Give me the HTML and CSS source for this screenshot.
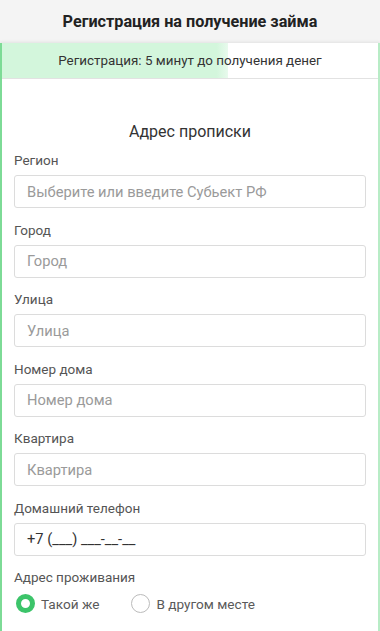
FILE: index.html
```html
<!DOCTYPE html>
<html lang="ru">
<head>
<meta charset="utf-8">
<link rel="stylesheet" href="styles.css">
</head>
<body>
<header class="top">Регистрация на получение займа</header>
<main class="card">
  <div class="progress">
    <div class="progress-fill" style="width:60%"></div>
    <span class="progress-text">Регистрация: 5 минут до получения денег</span>
  </div>
  <section class="form">
    <h2 class="form-title">Адрес прописки</h2>
    <div class="field">
      <label class="label">Регион</label>
      <div class="input placeholder">Выберите или введите Субьект РФ</div>
    </div>
    <div class="field">
      <label class="label">Город</label>
      <div class="input placeholder">Город</div>
    </div>
    <div class="field">
      <label class="label">Улица</label>
      <div class="input placeholder">Улица</div>
    </div>
    <div class="field">
      <label class="label">Номер дома</label>
      <div class="input placeholder">Номер дома</div>
    </div>
    <div class="field">
      <label class="label">Квартира</label>
      <div class="input placeholder">Квартира</div>
    </div>
    <div class="field">
      <label class="label">Домашний телефон</label>
      <div class="input value">+7 (___) ___-__-__</div>
    </div>
    <div class="field">
      <label class="label">Адрес проживания</label>
      <div class="radios">
        <span class="radio checked"><span class="dot"></span>Такой же</span>
        <span class="radio"><span class="dot"></span>В другом месте</span>
      </div>
    </div>
  </section>
</main>
</body>
</html>
```
FILE: styles.css
```css
* { box-sizing: border-box; }
html, body { margin: 0; padding: 0; }
body {
  width: 380px;
  height: 631px;
  overflow: hidden;
  background: #f4f4f4;
  font-family: Roboto, "Liberation Sans", sans-serif;
  color: #333;
}
.top {
  height: 43px;
  display: flex;
  align-items: center;
  justify-content: center;
  font-size: 16.2px;
  font-weight: 700;
  color: #222;
}
.card {
  background: #fff;
  border-left: 2px solid #7ddb96;
  border-right: 2px solid #b8ecc6;
  box-shadow: 0 -1px 3px rgba(0,0,0,0.08);
  height: 588px;
}
.progress {
  position: relative;
  height: 36px;
  border-bottom: 1px solid #e2e2e2;
  display: flex;
  align-items: center;
  justify-content: center;
}
.progress-fill {
  position: absolute;
  left: 0; top: 0; bottom: 0;
  background: linear-gradient(to right, #d3f6dc 95%, #e8faed);
}
.progress-text {
  position: relative;
  font-size: 13.4px;
  color: #333;
}
.form {
  padding: 0 12px;
}
.form-title {
  margin: 0;
  padding-top: 43px;
  height: 72px;
  font-size: 16px;
  font-weight: 400;
  text-align: center;
  color: #333;
  line-height: 20px;
}
.field {
  margin-bottom: 12.5px;
}
.label {
  display: block;
  font-size: 13.5px;
  line-height: 18px;
  color: #555;
  margin-bottom: 6px;
}
.input {
  height: 33px;
  border: 1px solid #dcdcdc;
  border-radius: 3px;
  padding: 0 12px;
  display: flex;
  align-items: center;
  font-size: 14.7px;
}
.placeholder { color: #9a9a9a; }
.value { color: #333; }
.radios {
  display: flex;
  align-items: center;
  gap: 32px;
  padding-left: 2px;
  margin-top: 8px;
}
.radio {
  display: flex;
  align-items: center;
  font-size: 13.6px;
  color: #5a5a5a;
  gap: 6px;
}
.dot {
  width: 19px;
  height: 19px;
  border-radius: 50%;
  border: 1px solid #bbb;
  background: #fff;
}
.radio.checked .dot {
  border: 5px solid #3cc46a;
}
```
